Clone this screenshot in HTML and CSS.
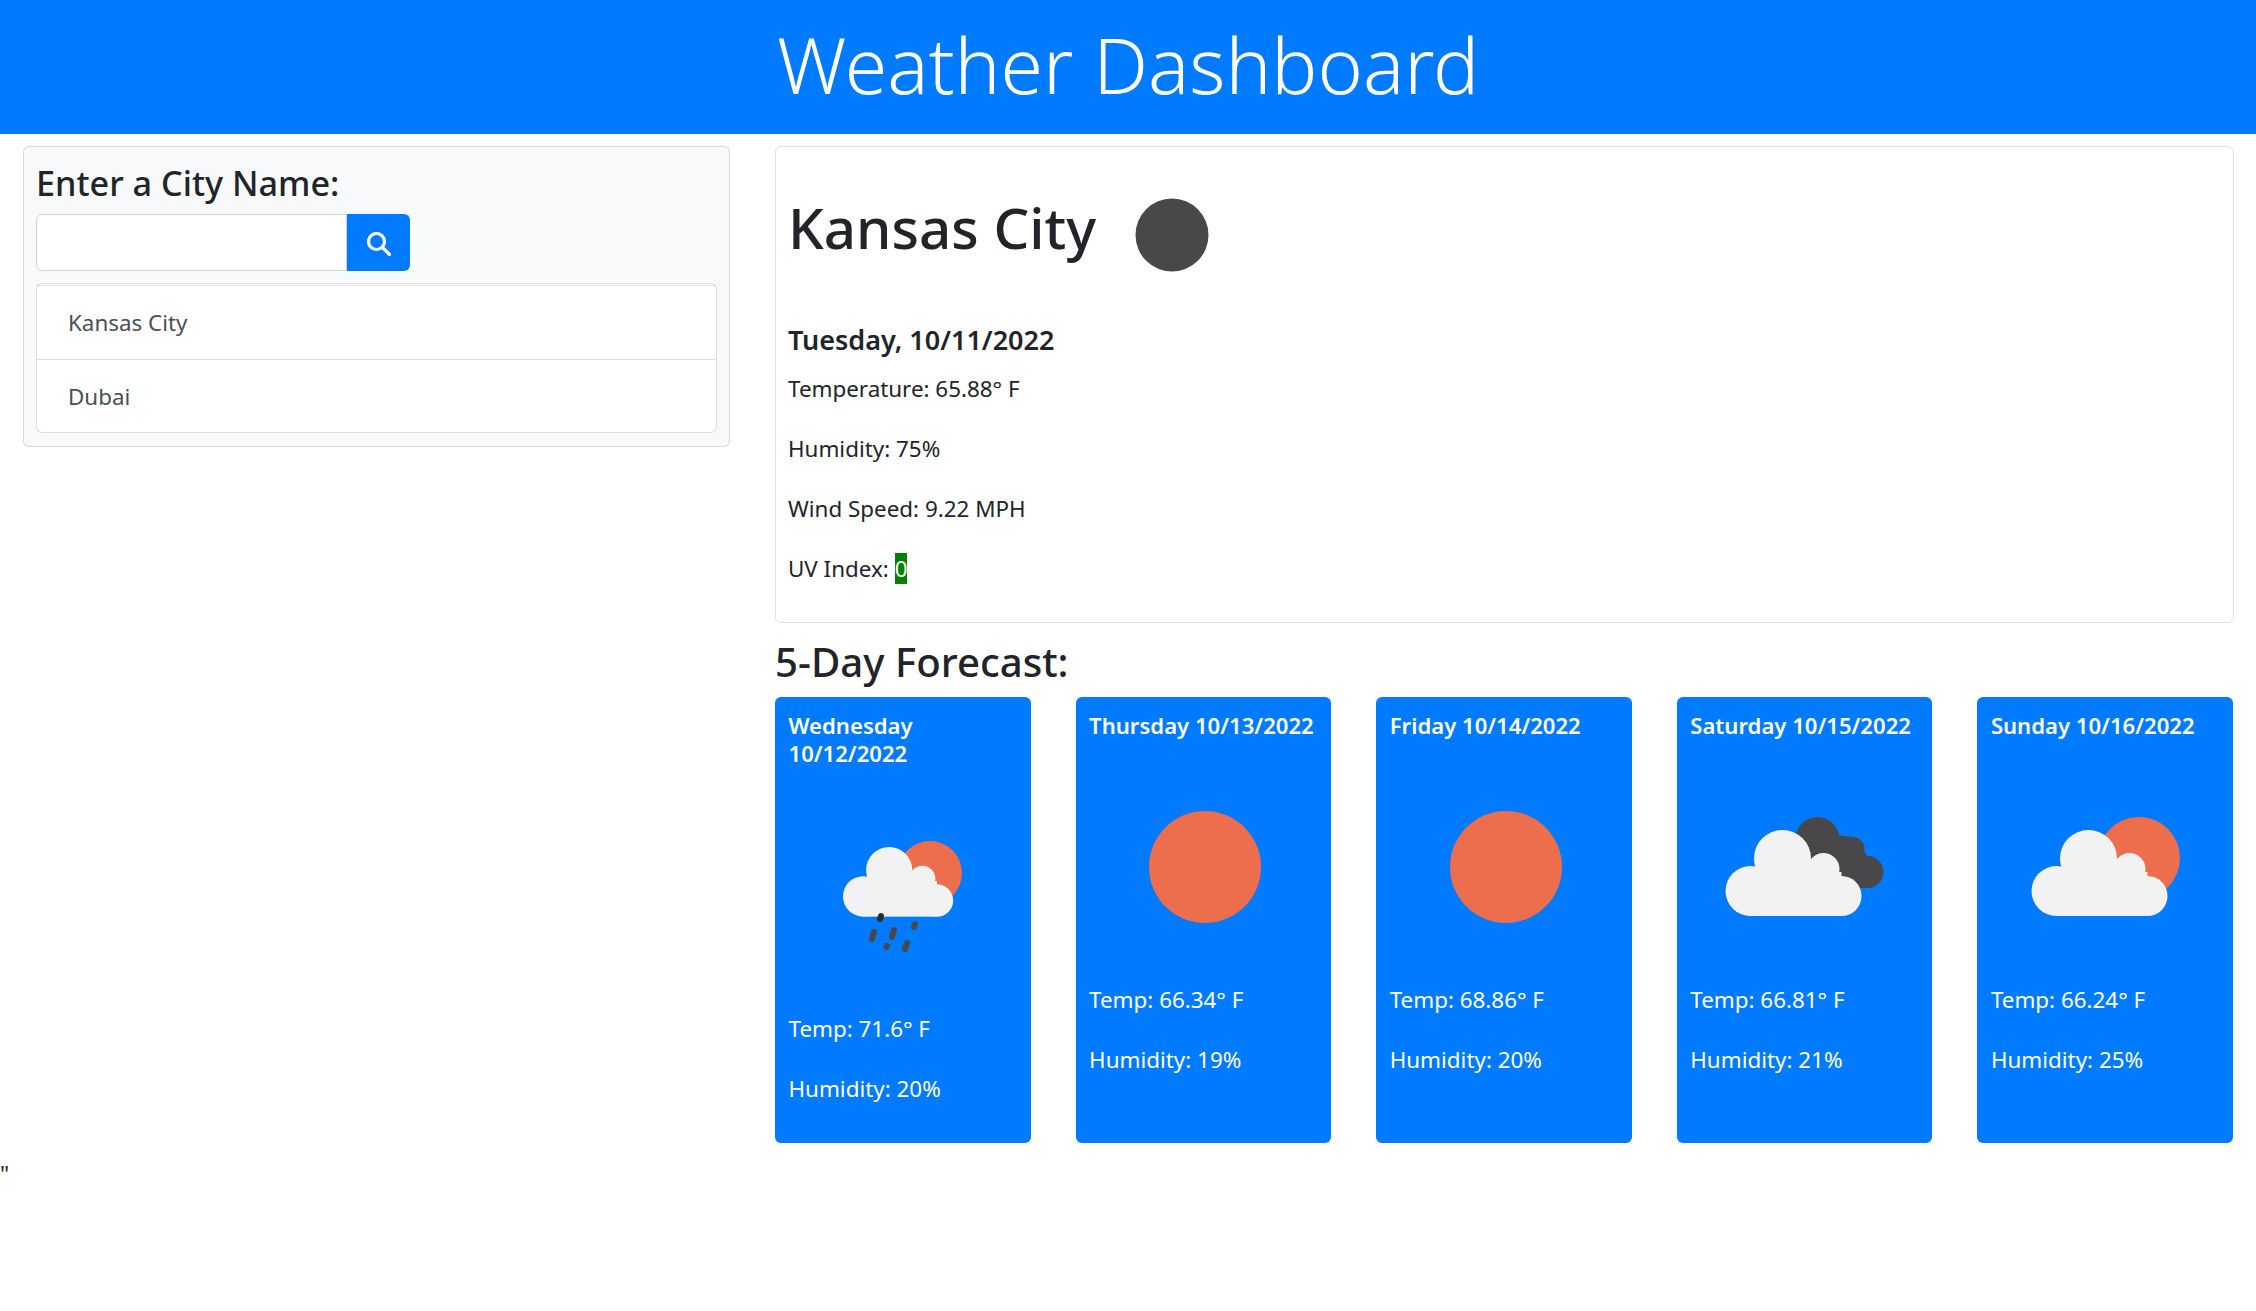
FILE: index.html
```html
<!DOCTYPE html>
<html lang="en">
<head>
<meta charset="utf-8">
<title>Weather Dashboard</title>
<link rel="stylesheet" href="styles.css">
</head>
<body>
<svg class="defs" width="0" height="0" aria-hidden="true">
  <defs>
    <g id="cloud">
      <circle class="white" cx="25" cy="61" r="25"/>
      <circle class="white" cx="57" cy="28.5" r="28.5"/>
      <circle class="white" cx="98" cy="39" r="16"/>
      <circle class="white" cx="116" cy="66" r="20"/>
      <rect class="white" x="25" y="42" width="91" height="44"/>
    </g>
  </defs>
</svg>
<header class="banner"><h1 class="banner-title">Weather Dashboard</h1></header>
<main class="layout">
  <aside class="sidebar">
    <section class="search-card">
      <h4 class="search-title">Enter a City Name:</h4>
      <form class="search-row">
        <input class="search-input" type="text" aria-label="City">
        <button class="search-btn" type="button" aria-label="Search">
          <svg class="search-icon" viewBox="0 0 24 24"><circle cx="9.500" cy="9.500" r="8"/><path d="M15.500 15.500L22.500 22.500"/></svg>
        </button>
      </form>
      <ul class="city-list">
        <li class="city-item">Kansas City</li>
        <li class="city-item">Dubai</li>
      </ul>
    </section>
  </aside>
  <div class="content">
    <section class="current">
      <div class="current-head">
        <h1 class="city-name">Kansas City</h1>
        <svg class="current-icon" viewBox="0 0 150 150"><circle class="dark" cx="75" cy="76" r="36.5"/></svg>
      </div>
      <h5 class="current-date">Tuesday, 10/11/2022</h5>
      <p class="stat">Temperature: 65.88° F</p>
      <p class="stat">Humidity: 75%</p>
      <p class="stat">Wind Speed: 9.22 MPH</p>
      <p class="stat">UV Index: <span class="uv">0</span></p>
    </section>
    <h3 class="forecast-title">5-Day Forecast:</h3>
    <div class="forecast">
      <article class="day">
        <h6 class="day-date">Wednesday 10/12/2022</h6>
        <svg class="day-icon" viewBox="0 0 225 225">
          <circle class="sun" cx="141" cy="91" r="32"/>
          <use href="#cloud" transform="translate(54 65) scale(.81)"/>
          <g class="rain">
            <path class="drop-top" d="M92 134l-1 3"/>
            <path d="M85 150l-2 7"/>
            <path d="M105 148l-2 7"/>
            <path d="M126 142l-1 3"/>
            <path d="M98 164l-.5 .8"/>
            <path d="M118 161l-2 6"/>
          </g>
        </svg>
        <p class="day-stat">Temp: 71.6° F</p>
        <p class="day-stat">Humidity: 20%</p>
      </article>
      <article class="day">
        <h6 class="day-date">Thursday 10/13/2022</h6>
        <svg class="day-icon" viewBox="0 0 225 225"><circle class="sun" cx="116" cy="114" r="56"/></svg>
        <p class="day-stat">Temp: 66.34° F</p>
        <p class="day-stat">Humidity: 19%</p>
      </article>
      <article class="day">
        <h6 class="day-date">Friday 10/14/2022</h6>
        <svg class="day-icon" viewBox="0 0 225 225"><circle class="sun" cx="116" cy="114" r="56"/></svg>
        <p class="day-stat">Temp: 68.86° F</p>
        <p class="day-stat">Humidity: 20%</p>
      </article>
      <article class="day">
        <h6 class="day-date">Saturday 10/15/2022</h6>
        <svg class="day-icon" viewBox="0 0 225 225">
          <g transform="translate(35.500 77)">
            <circle class="dark" cx="92" cy="9" r="22"/>
            <circle class="dark" cx="127" cy="19" r="12"/>
            <circle class="dark" cx="142" cy="42" r="16"/>
            <path class="dark" d="M75 0L127 7L142 26L142 58L100 58L75 30Z"/>
          </g>
          <use href="#cloud" transform="translate(35.500 77)"/>
        </svg>
        <p class="day-stat">Temp: 66.81° F</p>
        <p class="day-stat">Humidity: 21%</p>
      </article>
      <article class="day">
        <h6 class="day-date">Sunday 10/16/2022</h6>
        <svg class="day-icon" viewBox="0 0 225 225">
          <circle class="sun" cx="148" cy="105" r="41"/>
          <use href="#cloud" transform="translate(40.500 77)"/>
        </svg>
        <p class="day-stat">Temp: 66.24° F</p>
        <p class="day-stat">Humidity: 25%</p>
      </article>
    </div>
  </div>
</main>
<p class="stray">"</p>
</body>
</html>
```
FILE: styles.css
```css
* { box-sizing: border-box; }
html, body { margin: 0; padding: 0; }
body {
  font-family: "Noto Sans", "Open Sans", sans-serif;
  font-size: 22.4px;
  line-height: 36px;
  color: #212529;
  background: #fff;
}
h1, h3, h4, h5, h6, p, ul { margin: 0; padding: 0; }
.defs { position: absolute; }
.banner {
  height: 134px;
  background: #007bff;
  display: flex;
  align-items: center;
  justify-content: center;
  padding-bottom: 5px;
}
.banner-title {
  font-size: 77px;
  font-weight: 300;
  line-height: 100px;
  color: #fff;
}
.layout { display: flex; padding-top: 12px; }
.sidebar { width: 752px; flex: none; padding: 0 22px 0 23px; }
.search-card {
  background: #f8f9fa;
  border: 1.5px solid rgba(0,0,0,.125);
  border-radius: 6px;
  padding: 12px;
  height: 301px;
}
.search-title {
  font-size: 34.2px;
  font-weight: 500;
  line-height: 43px;
  margin-bottom: 12px;
  padding-top: 1.5px;
  height: 43px;
}
.search-row { display: flex; height: 57px; margin-bottom: 12px; }
.search-input {
  width: 311px;
  height: 57px;
  background: #fff;
  border: 1.5px solid #ced4da;
  border-radius: 6px 0 0 6px;
}
.search-btn {
  width: 63px;
  height: 57px;
  padding: 3px 0 0;
  border: 0;
  border-radius: 0 6px 6px 0;
  background: #007bff;
  display: flex;
  align-items: center;
  justify-content: center;
}
.search-icon { width: 24px; height: 24px; fill: none; stroke: #fff; stroke-width: 3.2; stroke-linecap: round; }
.city-list {
  list-style: none;
  border: 1.5px solid rgba(0,0,0,.125);
  border-radius: 6px;
  height: 150px;
  padding-top: .5px;
  background: #fff;
}
.city-item {
  height: 74px;
  padding: 19.5px 31px;
  color: #495057;
  border-top: 1.5px solid rgba(0,0,0,.125);
}
.content { width: 1504px; flex: none; padding: 0 22px 0 23px; }
.current {
  height: 477px;
  border: 1.5px solid rgba(0,0,0,.125);
  border-radius: 6px;
  padding: 12px;
}
.current-head { display: flex; align-items: center; height: 150px; margin-bottom: 13px; }
.city-name { font-size: 56.5px; font-weight: 500; line-height: 72px; margin-top: -13px; }
.current-icon { width: 150px; height: 150px; flex: none; margin-left: 1px; }
.current-date { font-size: 27px; font-weight: 600; line-height: 36px; margin-bottom: 12.5px; }
.stat { margin-bottom: 24px; }
.uv { background: #008000; color: #fff; }
.forecast-title { font-size: 40.2px; font-weight: 500; line-height: 50px; margin: 14px 0 10px; }
.forecast { display: flex; gap: 45px; margin-right: 1px; }
.day {
  flex: 1 1 0;
  height: 446px;
  background: #007bff;
  color: #fff;
  border-radius: 6px;
  padding: 13.5px;
}
.day-date { font-size: 22.1px; font-weight: 600; line-height: 28.8px; }
.day-icon { display: block; width: 225px; height: 225px; margin: 13.5px 0 4px; }
.day-stat { margin-bottom: 24px; }
.sun { fill: #ec6e4c; }
.dark { fill: #48484a; }
.white { fill: #f1f2f1; }
.rain path { stroke: #48484a; stroke-width: 6; stroke-linecap: round; fill: none; }
.rain .drop-top { stroke: #2c2c2e; }
.stray { margin-top: 13px; }
```
